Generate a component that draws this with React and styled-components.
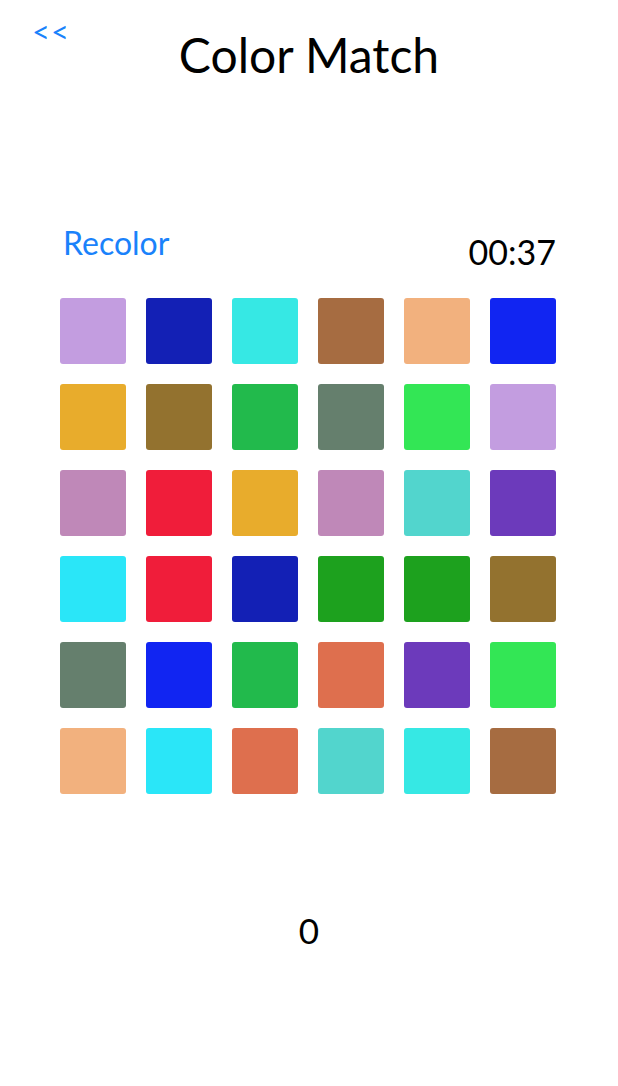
import styled, { createGlobalStyle } from 'styled-components'

const GlobalStyle = createGlobalStyle`
  html, body {
    margin: 0;
    padding: 0;
    background: #ffffff;
  }
  body {
    font-family: 'Lato', 'Noto Sans', sans-serif;
  }
`

const BLUE = '#1a82fb'

const COLORS = [
  ['#c39de0', '#1320b5', '#36e8e4', '#a66c41', '#f2b17e', '#1125f2'],
  ['#e8ac2c', '#93722f', '#22ba4c', '#657f6d', '#33e655', '#c39de0'],
  ['#bf88b8', '#f01d3a', '#e8ac2c', '#bf88b8', '#52d5cd', '#6c3abb'],
  ['#2ae6f8', '#f01d3a', '#1320b5', '#1da11e', '#1da11e', '#93722f'],
  ['#657f6d', '#1125f2', '#22ba4c', '#de6f4e', '#6c3abb', '#33e655'],
  ['#f2b17e', '#2ae6f8', '#de6f4e', '#52d5cd', '#36e8e4', '#a66c41'],
]

const Page = styled.div`
  width: 618px;
  min-height: 1086px;
  display: flex;
  flex-direction: column;
  align-items: center;
`

const Header = styled.header`
  position: relative;
  width: 100%;
  display: flex;
  justify-content: center;
  padding-top: 27px;
`

const BackLink = styled.a`
  position: absolute;
  top: 16px;
  left: 32px;
  font-size: 31px;
  line-height: 30px;
  font-weight: 400;
  letter-spacing: 1px;
  color: ${BLUE};
  text-decoration: none;
  cursor: pointer;
`

const Title = styled.h1`
  margin: 0;
  font-size: 48px;
  line-height: 56px;
  font-weight: 400;
  color: #000;
`

const Toolbar = styled.div`
  width: 496px;
  margin-left: 2px;
  margin-top: 141px;
  display: flex;
  justify-content: space-between;
  align-items: flex-end;
`

const RecolorButton = styled.button`
  border: none;
  background: none;
  padding: 0;
  margin: 0 0 10px 1px;
  font-family: inherit;
  font-size: 32px;
  line-height: 38px;
  color: ${BLUE};
  cursor: pointer;
`

const Timer = styled.span`
  font-size: 34px;
  line-height: 40px;
  color: #000;
  margin-right: 2px;
`

const Grid = styled.div`
  margin-top: 26px;
  margin-left: -2px;
  display: grid;
  grid-template-columns: repeat(6, 66px);
  grid-auto-rows: 66px;
  gap: 20px;
`

const Swatch = styled.div`
  border-radius: 3px;
  background: ${(p) => p.$color};
`

const Score = styled.div`
  margin-top: 114px;
  font-size: 35px;
  line-height: 44px;
  color: #000;
`

export default function App() {
  return (
    <Page>
      <GlobalStyle />
      <Header>
        <BackLink>&lt;&lt;</BackLink>
        <Title>Color Match</Title>
      </Header>
      <Toolbar>
        <RecolorButton>Recolor</RecolorButton>
        <Timer>00:37</Timer>
      </Toolbar>
      <Grid>
        {COLORS.flat().map((c, i) => (
          <Swatch key={i} $color={c} />
        ))}
      </Grid>
      <Score>0</Score>
    </Page>
  )
}
